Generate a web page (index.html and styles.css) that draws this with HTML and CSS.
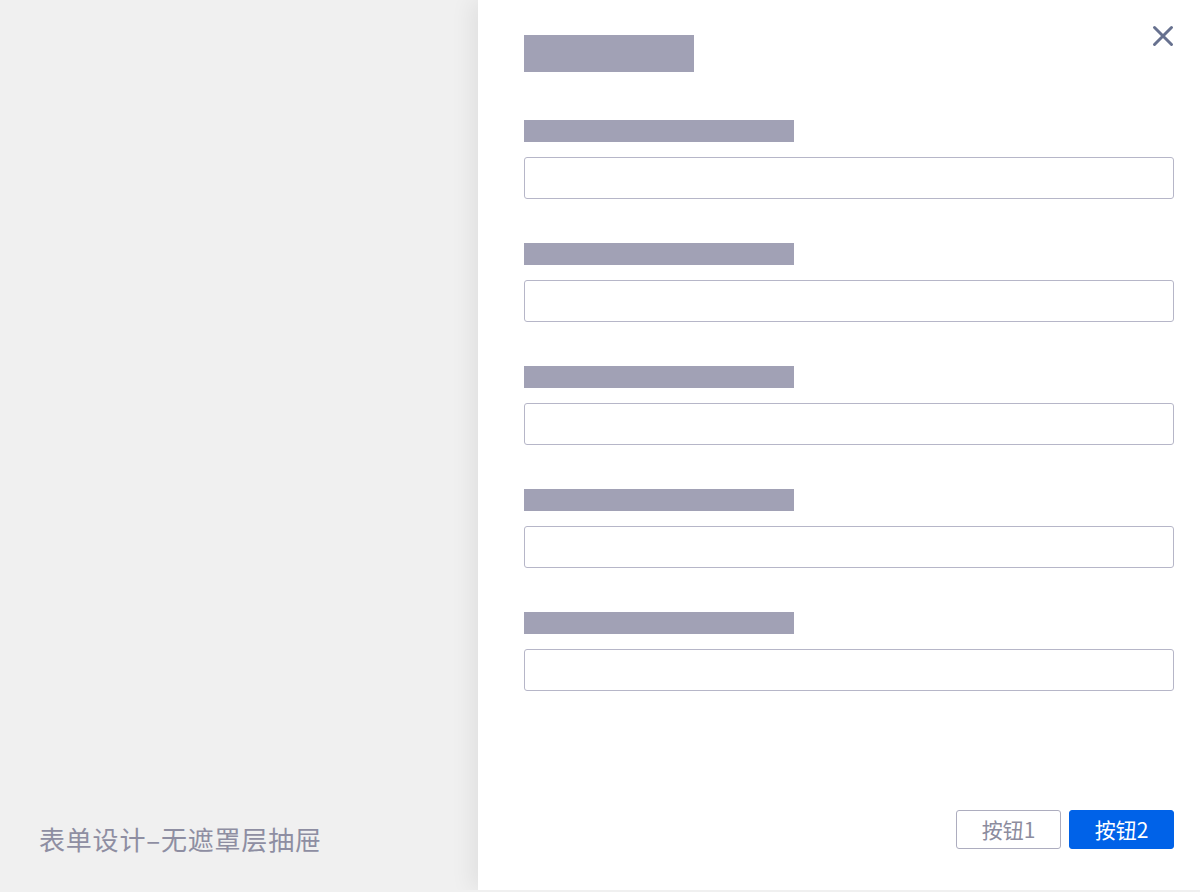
FILE: index.html
```html
<!DOCTYPE html>
<html lang="zh">
<head>
<meta charset="utf-8">
<title>表单设计-无遮罩层抽屉</title>
<link rel="stylesheet" href="styles.css">
</head>
<body>
<div class="page">
  <main class="canvas">
    <p class="caption">表单设计–无遮罩层抽屉</p>
  </main>
  <aside class="drawer">
    <header class="drawer-head">
      <div class="title-bar"></div>
      <button class="close" aria-label="关闭">
        <svg viewBox="0 0 24 24" width="24" height="24"><path d="M3.5 3.5 L20.5 20.5 M20.5 3.5 L3.5 20.5" stroke="#67718f" stroke-width="3" stroke-linecap="round" fill="none"/></svg>
      </button>
    </header>
    <form class="form">
      <div class="field"><div class="label-bar"></div><input class="input" type="text"></div>
      <div class="field"><div class="label-bar"></div><input class="input" type="text"></div>
      <div class="field"><div class="label-bar"></div><input class="input" type="text"></div>
      <div class="field"><div class="label-bar"></div><input class="input" type="text"></div>
      <div class="field"><div class="label-bar"></div><input class="input" type="text"></div>
    </form>
    <footer class="drawer-foot">
      <button class="btn btn-default">按钮1</button>
      <button class="btn btn-primary">按钮2</button>
    </footer>
  </aside>
</div>
</body>
</html>
```
FILE: styles.css
```css
* { box-sizing: border-box; }
html, body {
  margin: 0;
  padding: 0;
  background: #f0f0f0;
  font-family: "Noto Sans CJK SC", "Noto Sans", sans-serif;
}
.page {
  display: flex;
  height: 890px;
  width: 1200px;
}
.canvas {
  flex: 1;
  display: flex;
  flex-direction: column;
  justify-content: flex-end;
  padding: 0 0 33px 39px;
}
.caption {
  margin: 0;
  font-size: 26px;
  line-height: 36px;
  color: #8e8ea2;
  letter-spacing: 0.8px;
}
.drawer {
  width: 722px;
  background: #fff;
  box-shadow: -6px 0 22px rgba(0, 0, 0, 0.07);
  display: flex;
  flex-direction: column;
  padding: 24px 26px 41px 46px;
}
.drawer-head {
  display: flex;
  justify-content: space-between;
  align-items: flex-start;
}
.title-bar {
  width: 170px;
  height: 37px;
  margin-top: 11px;
  background: #a1a1b5;
}
.close {
  width: 24px;
  height: 24px;
  padding: 0;
  margin-right: -1px;
  border: 0;
  background: none;
  display: flex;
  align-items: center;
  justify-content: center;
}
.form {
  margin-top: 48px;
  display: flex;
  flex-direction: column;
  gap: 44px;
}
.field {
  display: flex;
  flex-direction: column;
  gap: 15px;
}
.label-bar {
  width: 270px;
  height: 22px;
  background: #a1a1b5;
}
.input {
  width: 650px;
  height: 42px;
  border: 1px solid #b6b6c8;
  border-radius: 3px;
  background: #fff;
  margin: 0;
}
.drawer-foot {
  margin-top: auto;
  display: flex;
  justify-content: flex-end;
  gap: 8px;
}
.btn {
  width: 105px;
  height: 39px;
  border-radius: 3px;
  font-family: "Noto Sans CJK SC", "Noto Sans", sans-serif;
  font-size: 21px;
  line-height: 1;
  padding: 0;
  display: flex;
  align-items: center;
  justify-content: center;
}
.btn-default {
  background: #fff;
  border: 1px solid #adadbf;
  color: #8c8c9e;
}
.btn-primary {
  background: #0062e8;
  border: 1px solid #0062e8;
  color: #fff;
}
```
